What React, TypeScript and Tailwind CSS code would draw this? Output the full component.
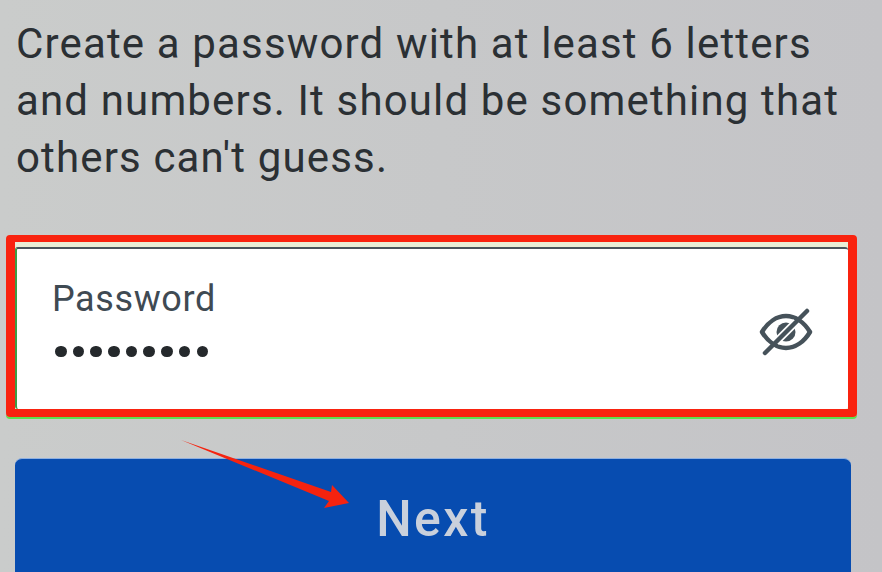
export default function App() {
  return (
    <div className="relative w-[882px] h-[572px] overflow-hidden bg-gradient-to-r from-[#cacccb] to-[#c4c4c7] font-['Roboto',sans-serif]">
      <p className="pt-[15px] pl-[16px] pr-[20px] text-[42px] leading-[57px] tracking-[1.15px] text-[#2b3034] whitespace-nowrap">
        Create a password with at least 6 letters
        <br />
        and numbers. It should be something that
        <br />
        others can't guess.
      </p>

      <div className="mt-[49px] ml-[6px] w-[851px] h-[182px] rounded-[4px] border-x-[9px] border-t-[7px] border-b-[8px] border-[#f9230f] shadow-[0_2px_0_#5fe04f]">
        <div className="flex flex-col h-full pt-[5px] bg-[#e9eed6]">
          <div className="flex flex-1 items-center justify-between bg-white rounded-[3px] border-t-2 border-l-2 border-[#4a555c] border-l-[#3f9a45] pl-[35px] pr-[35px]">
            <div className="flex flex-col pb-[22px]">
              <span className="text-[36px] leading-[41px] tracking-[0.6px] text-[#3f4a53]">Password</span>
              <div className="flex gap-[6.2px] mt-[26px] pl-[3px]">
                {[0, 1, 2, 3, 4, 5, 6, 7, 8].map((i) => (
                  <span key={i} className="w-[11.5px] h-[11.5px] rounded-full bg-[#25292c]" />
                ))}
              </div>
            </div>
            <svg width="54" height="50" viewBox="0 0 54 50" fill="none" stroke="#46525a" strokeLinecap="round" className="mt-[5px]">
              <path d="M3 25 C9 15 18 9 27 9 C36 9 45 15 51 25 C45 35 36 41 27 41 C18 41 9 35 3 25 Z" strokeWidth="4.5" strokeLinejoin="round" />
              <circle cx="27" cy="25" r="9.5" fill="#46525a" stroke="none" />
              <path d="M17 35 L37 15" stroke="#ffffff" strokeWidth="8" strokeLinecap="butt" />
              <path d="M6 46 L48 4" strokeWidth="4.5" />
            </svg>
          </div>
        </div>
      </div>

      <button className="flex justify-center items-start mt-[41px] ml-[15px] w-[836px] h-[140px] rounded-[7px] bg-[#074cb0] border-t border-[#8fb0e0]">
        <span className="block pt-[32px] text-[50px] leading-[56px] tracking-[2.4px] font-medium text-[#c9d0dc]">Next</span>
      </button>

      <svg className="absolute left-0 top-0 pointer-events-none" width="882" height="572" viewBox="0 0 882 572">
        <path d="M181 440 L331 492 L332 485 L349 503 L324 508 L329 501 Z" fill="#f5230f" />
      </svg>
    </div>
  )
}
